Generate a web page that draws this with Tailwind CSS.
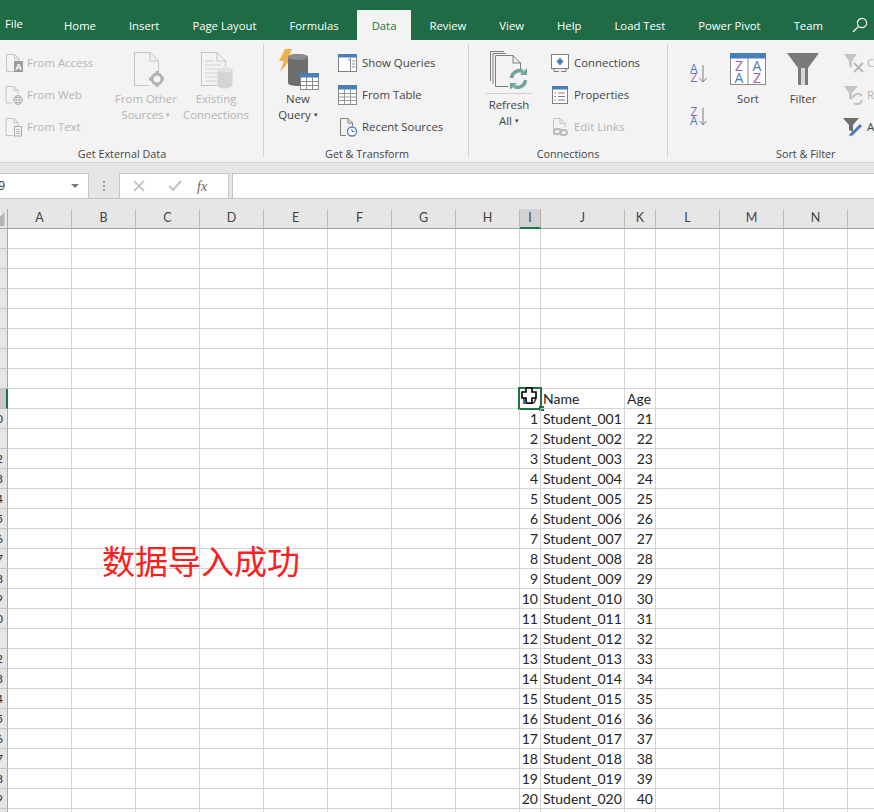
<!DOCTYPE html>
<html lang="en">
<head>
  <meta charset="UTF-8">
  <title>Excel - Data</title>
  <script src="https://cdn.jsdelivr.net/npm/@tailwindcss/browser@4"></script>
</head>
<body class="w-[874px] h-[812px] overflow-hidden bg-white font-['Open_Sans',sans-serif] text-[11.4px] text-[#444]">

  <!-- tab bar -->
  <div class="h-[40px] bg-[#1e6b46] flex items-end text-white text-[11.3px] whitespace-nowrap">
    <div class="w-[64px] h-[30px] shrink-0 pl-[5px] leading-[28px]">File</div>
    <div class="flex gap-[33px] h-[30px] leading-[32px] shrink-0">
      <div>Home</div>
      <div>Insert</div>
      <div>Page Layout</div>
      <div>Formulas</div>
      <div class="bg-[#f3f3f3] text-[#217346] px-[15px] -mx-[15px]">Data</div>
      <div>Review</div>
      <div>View</div>
      <div>Help</div>
      <div>Load Test</div>
      <div>Power Pivot</div>
      <div>Team</div>
    </div>
    <svg class="ml-[29px] mb-[7px] w-[16px] h-[16px] shrink-0" viewBox="0 0 16 16" fill="none" stroke="white" stroke-width="1.2">
      <circle cx="10" cy="6" r="4.6"/><path d="M6.6 9.4 1 15"/>
    </svg>
  </div>

  <!-- ribbon -->
  <div class="h-[123px] bg-[#f3f3f3] border-b border-[#d2d2d2] flex overflow-hidden whitespace-nowrap">

    <!-- Get External Data -->
    <div class="w-[263px] shrink-0 flex flex-col">
      <div class="flex-1 flex">
        <div class="ml-[5px] w-[106px] pt-[7px] text-[#b4b4b4]">
          <div class="h-[32px] flex items-center gap-[3px]">
            <svg class="w-[19px] h-[20px]" viewBox="0 0 19 20" fill="none" stroke="#c8c0c8">
              <path d="M1.5 18.5V1.5H9.5L14 6V8M9.5 1.5V6H14M1.5 18.5H9"/>
              <rect x="9" y="8" width="9" height="11" fill="#9c9c9c" stroke="none"/>
              <text x="10.5" y="17" font-size="9" font-weight="700" fill="white" stroke="none">A</text>
            </svg>
            <span>From Access</span>
          </div>
          <div class="h-[32px] flex items-center gap-[3px]">
            <svg class="w-[19px] h-[20px]" viewBox="0 0 19 20" fill="none" stroke="#c8c0c8">
              <path d="M1 18V1.5H9L13 5.5V9M9 1.5V5.500H13M1 18H7"/>
              <g stroke="#a8a8a8" stroke-width=".8"><circle cx="13" cy="15" r="4.500"/><ellipse cx="13" cy="15" rx="2" ry="4.500"/><path d="M8.500 15H17.500M9.500 12.500H16.500M9.500 17.500H16.500"/></g>
            </svg>
            <span>From Web</span>
          </div>
          <div class="h-[32px] flex items-center gap-[3px]">
            <svg class="w-[19px] h-[20px]" viewBox="0 0 19 20" fill="none" stroke="#c8c0c8">
              <path d="M1 18.500V1.500H9L13 5.500V9M9 1.500V5.500H13M1 18.500H8"/>
              <g stroke="#a8a8a8"><rect x="9.500" y="9.500" width="7" height="9.500" fill="#f3f3f3"/><path d="M11 12.500H15M11 14.500H15M11 16.500H15" stroke-width=".8"/></g>
            </svg>
            <span>From Text</span>
          </div>
        </div>
        <div class="w-[70px] pt-[12px] flex flex-col items-center text-[#b4b4b4] leading-[16px]">
          <svg class="w-[36px] h-[38px] shrink-0" viewBox="0 0 36 38" fill="none">
            <path d="M6.500 33.500V.5H22L30.500 9V21M22 .5V9H30.500M6.500 33.500H21" stroke="#c8c0c8"/>
            <circle cx="29" cy="27" r="5" stroke="#b2b2b2" stroke-width="3"/>
            <path d="M29 19V22M29 32V35M21 27H24M34 27H37" stroke="#b2b2b2" stroke-width="3"/>
          </svg>
          <div class="mt-[1px] text-center">From Other<br>Sources <span class="text-[7px] align-[2px]">▾</span></div>
        </div>
        <div class="w-[70px] pt-[12px] flex flex-col items-center text-[#b4b4b4] leading-[16px]">
          <svg class="w-[36px] h-[38px] shrink-0" viewBox="0 0 36 38" fill="none">
            <path d="M3.500 33.500V.5H19L27.500 9V14M19 .5V9H27.500M3.500 33.500H19" stroke="#c8c0c8"/>
            <path d="M7 9H16M7 13H23M7 17H23M7 21H19M7 25H19M7 29H19" stroke="#cfcfcf"/>
            <path d="M19.500 18.500C19.500 14.500 34.500 14.500 34.500 18.500V33C34.500 37.500 19.500 37.500 19.500 33Z" fill="#d4d4d4"/>
            <ellipse cx="27" cy="18" rx="7.500" ry="2.500" fill="#e2e2e2"/>
          </svg>
          <div class="mt-[1px] text-center">Existing<br>Connections</div>
        </div>
      </div>
      <div class="h-[16px] leading-[16px] text-center text-[10.8px] w-[244px]">Get External Data</div>
    </div>
    <div class="w-px h-[113px] mt-[4px] shrink-0 bg-[#d2d2d2]"></div>

    <!-- Get & Transform -->
    <div class="w-[204px] shrink-0 flex flex-col">
      <div class="flex-1 flex">
        <div class="ml-[7px] w-[54px] pt-[9px] flex flex-col items-center leading-[16px]">
          <svg class="w-[42px] h-[41px] shrink-0" viewBox="0 0 42 41" fill="none">
            <path d="M8 0H15L11 9H15L3 23L7 12H2Z" fill="#f0b04c"/>
            <path d="M11 8C11 4 31 4 31 8V34C31 38 11 38 11 34Z" fill="#6e6e6e"/>
            <ellipse cx="21" cy="8" rx="10" ry="3" fill="#8c8c8c"/>
            <rect x="23.500" y="24.500" width="18" height="16" fill="white" stroke="#8a8a8a"/>
            <rect x="23" y="24" width="19" height="4.500" fill="#4a7ebb"/>
            <path d="M29.500 28V40M35.500 28V40M24 32.500H41M24 36.500H41" stroke="#8a8a8a"/>
          </svg>
          <div class="mt-[1px] text-center">New<br>Query <span class="text-[7px] align-[2px]">▾</span></div>
        </div>
        <div class="ml-[13px] pt-[7px]">
          <div class="h-[32px] flex items-center gap-[5px]">
            <svg class="w-[19px] h-[20px]" viewBox="0 0 19 20" fill="none">
              <rect x=".5" y="1.500" width="18" height="17" fill="white" stroke="#7f7f7f"/>
              <rect y="1" width="19" height="3.500" fill="#4a7ebb"/>
              <path d="M12.500 4.500V18.500M14 8H17M14 11H17M14 14H17M10 7H12" stroke="#8a8a8a"/>
            </svg>
            <span>Show Queries</span>
          </div>
          <div class="h-[32px] flex items-center gap-[5px]">
            <svg class="w-[19px] h-[20px]" viewBox="0 0 19 20" fill="none">
              <rect x=".5" y=".5" width="18" height="19" fill="white" stroke="#8a8a8a"/>
              <rect width="19" height="4.500" fill="#4a7ebb"/>
              <path d="M6.500 4.500V19M12.500 4.500V19M1 8.500H18M1 12H18M1 15.500H18" stroke="#9a9a9a"/>
            </svg>
            <span>From Table</span>
          </div>
          <div class="h-[32px] flex items-center gap-[4px] pl-[1px]">
            <svg class="w-[19px] h-[20px]" viewBox="0 0 19 20" fill="none">
              <path d="M1.500 18.500V1.500H9L13.500 6V9M9 1.500V6H13.500M1.500 18.500H7" stroke="#7f7f7f"/>
              <circle cx="13" cy="14.500" r="4.500" fill="white" stroke="#4a7ebb" stroke-width="1.300"/>
              <path d="M13 12V14.500H15.500" stroke="#4a7ebb"/>
            </svg>
            <span>Recent Sources</span>
          </div>
        </div>
      </div>
      <div class="h-[16px] leading-[16px] text-center text-[10.8px] w-[206px]">Get &amp; Transform</div>
    </div>
    <div class="w-px h-[113px] mt-[4px] shrink-0 bg-[#d2d2d2]"></div>

    <!-- Connections -->
    <div class="w-[198px] shrink-0 flex flex-col">
      <div class="flex-1 flex">
        <div class="ml-[15px] w-[50px] pt-[11px] flex flex-col items-center leading-[16px]">
          <svg class="w-[38px] h-[38px] shrink-0" viewBox="0 0 38 38" fill="none" stroke="#7f7f7f">
            <path d="M.5 30V.5H14"/><path d="M3 33V2.500H16"/><path d="M5.500 35.500V4.500H23L30.500 12V19M23 4.500V12H30.500M5.500 35.500H18" fill="#f3f3f3"/>
            <g stroke="#6fa59a" stroke-width="3.500"><path d="M21.500 27A8 8 0 0 1 33 20.500"/><path d="M35.500 29A8 8 0 0 1 24 35.500"/></g>
            <path d="M30 24H37V17ZM27 32H20V39Z" fill="#6fa59a" stroke="none"/>
          </svg>
          <div class="w-[46px] h-px bg-[#cfcfcf] mt-[4px] shrink-0"></div>
          <div class="mt-[3px] text-center">Refresh<br>All <span class="text-[7px] align-[2px]">▾</span></div>
        </div>
        <div class="ml-[17px] pt-[7px]">
          <div class="h-[32px] flex items-center gap-[5px]">
            <svg class="w-[18px] h-[18px]" viewBox="0 0 18 18" fill="none">
              <rect x=".5" y=".5" width="17" height="14" fill="white" stroke="#7f7f7f"/>
              <path d="M9 3.500 12.500 7.500 9 11.500 5.500 7.500Z" fill="#4a7ebb"/>
              <path d="M3 17.500H8M10 17.500H15M3 14.500V17.500M15 14.500V17.500" stroke="#7f7f7f"/>
            </svg>
            <span>Connections</span>
          </div>
          <div class="h-[32px] flex items-center gap-[5px]">
            <svg class="w-[18px] h-[18px]" viewBox="0 0 18 18" fill="none">
              <rect x="1.500" y=".5" width="15" height="17" fill="white" stroke="#7f7f7f"/>
              <rect x="1" width="16" height="3.500" fill="#4a7ebb"/>
              <path d="M7 7H14M7 10.500H14M7 14H14" stroke="#7f7f7f"/>
              <path d="M3.500 7H5M3.500 10.500H5M3.500 14H5" stroke="#4a7ebb"/>
            </svg>
            <span>Properties</span>
          </div>
          <div class="h-[32px] flex items-center gap-[5px] text-[#b4b4b4]">
            <svg class="w-[18px] h-[20px]" viewBox="0 0 18 20" fill="none" stroke="#c8c0c8">
              <path d="M2.500 18.500V1.500H9L14 6.500V10M9 1.500V6.500H14"/>
              <g stroke="#b8b8b8" stroke-width="1.800"><rect x="3" y="12" width="7" height="5" rx="2.500"/><rect x="9" y="13" width="7" height="5" rx="2.500"/></g>
            </svg>
            <span>Edit Links</span>
          </div>
        </div>
      </div>
      <div class="h-[16px] leading-[16px] text-center text-[10.8px]">Connections</div>
    </div>
    <div class="w-px h-[113px] mt-[4px] shrink-0 bg-[#d2d2d2]"></div>

    <!-- Sort & Filter -->
    <div class="w-[206px] shrink-0 flex flex-col">
      <div class="flex-1 flex">
        <div class="ml-[22px] w-[18px] pt-[23px] flex flex-col gap-[23px] shrink-0">
          <svg class="w-[18px] h-[20px]" viewBox="0 0 18 20" fill="none">
            <text x="0" y="10" font-size="12" fill="#4a7ebb" font-family="Open Sans">A</text>
            <text x=".5" y="19" font-size="12" fill="#8f5fa8" font-family="Open Sans">Z</text>
            <path d="M13 2V19M9.500 15 13 19 16.500 15" stroke="#7f7f7f"/>
          </svg>
          <svg class="w-[18px] h-[20px]" viewBox="0 0 18 20" fill="none">
            <text x=".5" y="10" font-size="12" fill="#8f5fa8" font-family="Open Sans">Z</text>
            <text x="0" y="19" font-size="12" fill="#4a7ebb" font-family="Open Sans">A</text>
            <path d="M13 2V19M9.500 15 13 19 16.500 15" stroke="#7f7f7f"/>
          </svg>
        </div>
        <div class="ml-[15px] w-[50px] shrink-0 pt-[13px] flex flex-col items-center leading-[16px]">
          <svg class="w-[36px] h-[32px] shrink-0" viewBox="0 0 36 32" fill="none">
            <rect x=".5" y=".5" width="35" height="31" fill="white" stroke="#8a8a8a"/>
            <rect width="36" height="5.500" fill="#4a7ebb"/>
            <path d="M18 5V31" stroke="#8a8a8a"/>
            <text x="9" y="18" font-size="14" text-anchor="middle" fill="#8f5fa8" font-family="Open Sans">Z</text>
            <text x="9" y="30" font-size="14" text-anchor="middle" fill="#4a7ebb" font-family="Open Sans">A</text>
            <text x="27" y="18" font-size="14" text-anchor="middle" fill="#4a7ebb" font-family="Open Sans">A</text>
            <text x="27" y="30" font-size="14" text-anchor="middle" fill="#8f5fa8" font-family="Open Sans">Z</text>
          </svg>
          <div class="mt-[6px]">Sort</div>
        </div>
        <div class="ml-[5px] w-[50px] shrink-0 pt-[13px] flex flex-col items-center leading-[16px]">
          <svg class="w-[32px] h-[32px] shrink-0" viewBox="0 0 32 32">
            <path d="M0 0H32L21 15V32H11V15Z" fill="#7a7a7a"/>
            <path d="M14 15H18V32H14Z" fill="#d8d8d8"/>
          </svg>
          <div class="mt-[6px]">Filter</div>
        </div>
        <div class="ml-[15px] pt-[7px] shrink-0">
          <div class="h-[32px] flex items-center gap-[3px] text-[#b4b4b4]">
            <svg class="w-[21px] h-[20px]" viewBox="0 0 21 20" fill="none">
              <path d="M1 1H14L9 8V15L6 13V8Z" fill="#c4c4c4"/>
              <path d="M11 10 20 19M20 10 11 19" stroke="#b8b8b8" stroke-width="2"/>
            </svg>
            <span>Clear</span>
          </div>
          <div class="h-[32px] flex items-center gap-[3px] text-[#b4b4b4]">
            <svg class="w-[21px] h-[20px]" viewBox="0 0 21 20" fill="none">
              <path d="M1 1H15L9 8V15L6 13V8Z" fill="#c4c4c4"/>
              <path d="M10 13A5 5 0 0 1 19 11M19 15A5 5 0 0 1 11 18" stroke="#c4c4c4" stroke-width="2"/>
            </svg>
            <span>Reapply</span>
          </div>
          <div class="h-[32px] flex items-center gap-[3px]">
            <svg class="w-[21px] h-[20px]" viewBox="0 0 21 20" fill="none">
              <path d="M0 1H16L10 8V15L6 13V8Z" fill="#6e6e6e"/>
              <path d="M8 18 18 8" stroke="#4a7ebb" stroke-width="3"/>
              <path d="M6 19.500 7 16 9 18Z" fill="#4a7ebb"/>
            </svg>
            <span>Advanced</span>
          </div>
        </div>
      </div>
      <div class="h-[16px] leading-[16px] text-[10.8px] pl-[108px]">Sort &amp; Filter</div>
    </div>
  </div>

  <!-- formula bar -->
  <div class="h-[36px] bg-[#e6e6e6] flex items-start pt-[10px] border-b border-[#c6c6c6]">
    <div class="w-[89px] h-[26px] bg-white border border-l-0 border-[#c6c6c6] flex items-center justify-between pr-[9px]">
      <span class="w-[5px] flex justify-end overflow-hidden text-[12px] text-[#333]">I9</span>
      <span class="w-0 h-0 border-x-[4px] border-t-[4px] border-x-transparent border-t-[#777]"></span>
    </div>
    <div class="w-[30px] h-[25px] flex flex-col items-center justify-center gap-[2px]">
      <span class="w-[2px] h-[2px] bg-[#a0a0a0]"></span>
      <span class="w-[2px] h-[2px] bg-[#a0a0a0]"></span>
      <span class="w-[2px] h-[2px] bg-[#a0a0a0]"></span>
    </div>
    <div class="w-[110px] h-[26px] bg-white border border-[#c6c6c6] flex items-center">
      <svg class="ml-[13px] w-[12px] h-[12px]" viewBox="0 0 12 12" fill="none" stroke="#b8b8b8" stroke-width="1.500"><path d="M1 1 11 11M11 1 1 11"/></svg>
      <svg class="ml-[23px] w-[14px] h-[12px]" viewBox="0 0 14 12" fill="none" stroke="#c4c4c4" stroke-width="2"><path d="M1 6 5 10 13 1"/></svg>
      <span class="ml-[15px] font-['Liberation_Serif',serif] italic text-[14px] text-[#666]">fx</span>
    </div>
    <div class="ml-[3px] flex-1 h-[26px] bg-white border border-r-0 border-[#c6c6c6]"></div>
  </div>

  <!-- sheet -->
  <div class="h-[10px] bg-[#e6e6e6]"></div>
  <div class="relative">
    <div id="sheet" class="grid grid-cols-[8px_repeat(8,64px)_21px_84px_31px_repeat(4,64px)] auto-rows-[20px] w-[912px] font-['Lato',sans-serif] text-[14px] text-[#222]"></div>
    <svg class="absolute left-0 top-[3px] w-[5px] h-[14px]" viewBox="0 0 5 14"><path d="M0 14H4.500V0L0 5Z" fill="#b4b4b4"/></svg>

    <!-- note over the sheet -->
    <div class="absolute left-[102px] top-[328px] font-['Noto_Sans_CJK_SC',sans-serif] text-[33px] leading-[46px] text-[#fb2020] whitespace-nowrap">数据导入成功</div>
  </div>

  <script>
    var sheet = document.getElementById('sheet');
    var letters = ['A','B','C','D','E','F','G','H','I','J','K','L','M','N','O'];
    var html = '<div class="bg-[#e6e6e6] border-r border-b border-[#a8a8a8]"></div>';
    letters.forEach(function (l) {
      if (l === 'I') {
        html += '<div class="bg-[#d2d2d2] border-r border-b-2 border-r-[#b0b0b0] border-b-[#217346] flex items-center justify-center font-[\'Open_Sans\'] text-[12.5px] text-[#444]">I</div>';
      } else {
        html += '<div class="bg-[#e6e6e6] border-r border-b border-r-[#b8b8b8] border-b-[#9f9f9f] flex items-center justify-center font-[\'Open_Sans\'] text-[12.5px] text-[#444]">' + l + '</div>';
      }
    });
    for (var r = 1; r <= 30; r++) {
      var n = r - 9;
      if (r === 9) {
        html += '<div class="bg-[#c8c8c8] border-r-2 border-b border-r-[#217346] border-b-[#b8b8b8]"></div>';
      } else {
        var tail = r >= 10 && r % 10 !== 1 ? r : '';
        html += '<div class="bg-[#e6e6e6] border-r border-b border-r-[#a8a8a8] border-b-[#c4c4c4] overflow-hidden flex items-center justify-end pr-[4px] text-[12px] text-[#333]">' + tail + '</div>';
      }
      letters.forEach(function (l) {
        var text = '';
        var align = 'justify-start pl-[2px]';
        if (l === 'I' && r === 9) text = 'ID';
        if (l === 'J' && r === 9) text = 'Name';
        if (l === 'K' && r === 9) text = 'Age';
        if (r > 9 && n <= 20) {
          if (l === 'I') { text = n; align = 'justify-end pr-[2px]'; }
          if (l === 'J') text = 'Student_' + String(n).padStart(3, '0');
          if (l === 'K') { text = n + 20; align = 'justify-end pr-[2px]'; }
        }
        var extra = '';
        if (l === 'I' && r === 9) {
          extra = '<div class="absolute -left-[2px] -top-[2px] w-[24px] h-[23px] border-2 border-[#217346]"></div>' +
            '<div class="absolute left-[19px] top-[17px] w-[5px] h-[5px] bg-[#217346]"></div>' +
            '<svg class="absolute left-[1px] -top-[2px] w-[16px] h-[17px]" viewBox="0 0 16 17"><path d="M5 1H11V5H15V11H11V16H5V11H1V5H5Z" fill="white" stroke="black" stroke-width="1.600"/></svg>';
        }
        html += '<div class="relative border-r border-b border-[#d4d4d4] flex items-center whitespace-nowrap ' + align + '">' + text + extra + '</div>';
      });
    }
    sheet.innerHTML = html;
  </script>
</body>
</html>
